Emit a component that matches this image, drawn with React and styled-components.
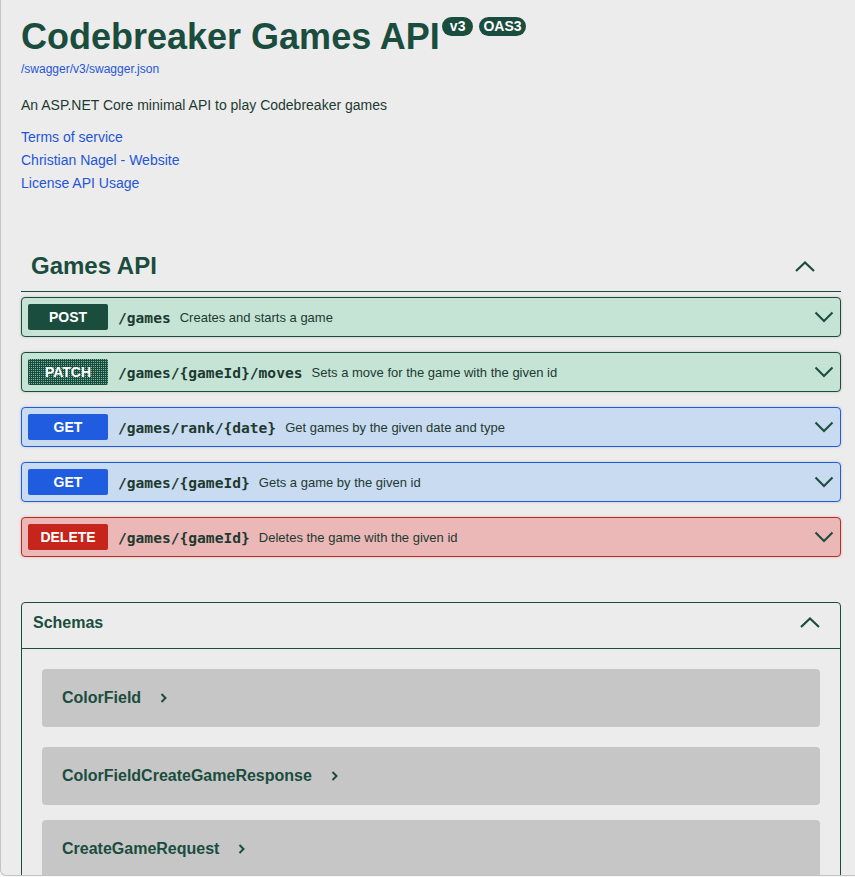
import React from "react";
import styled, { createGlobalStyle } from "styled-components";

const GREEN = "#1b4d3e";
const LINK = "#1f55d8";

const Global = createGlobalStyle`
  html, body { margin: 0; padding: 0; background: #f7f7f7; }
  body { font-family: "Liberation Sans", Arial, sans-serif; color: ${GREEN}; }
  * { box-sizing: border-box; }
`;

const Page = styled.div`
  height: 876px;
  border-left: 1px solid #c4c4c4;
  border-bottom: 1px solid #c4c4c4;
  border-bottom-left-radius: 6px;
  background: #ececec;
  overflow: hidden;
  padding: 16px 14px 0 20px;
`;

const TitleRow = styled.div`
  display: flex;
  align-items: flex-start;
`;

const Title = styled.h2`
  margin: 0;
  font-size: 36px;
  line-height: 42px;
  font-weight: 700;
  color: ${GREEN};
`;

const Badge = styled.span`
  display: inline-block;
  margin: 1px 0 0 ${(p) => p.$ml}px;
  padding: 0 ${(p) => p.$px}px;
  height: 19px;
  line-height: 19px;
  border-radius: 10px;
  background: ${GREEN};
  color: #fff;
  font-size: 14px;
  font-weight: 700;
`;

const JsonLink = styled.a`
  display: block;
  margin-top: 4px;
  font-size: 12px;
  line-height: 14px;
  color: ${LINK};
  text-decoration: none;
`;

const Description = styled.p`
  margin: 21px 0 13px;
  font-size: 14px;
  line-height: 16px;
  color: #1d3a31;
`;

const InfoLink = styled.a`
  display: block;
  font-size: 14px;
  line-height: 23px;
  color: ${LINK};
  text-decoration: none;
`;

const TagHeader = styled.div`
  margin-top: 44px;
  height: 53px;
  padding: 2px 26px 0 10px;
  border-bottom: 1px solid ${GREEN};
  display: flex;
  align-items: center;
  justify-content: space-between;
`;

const TagTitle = styled.h3`
  margin: 0;
  font-size: 24px;
  line-height: 28px;
  font-weight: 700;
  color: ${GREEN};
`;

const OpList = styled.div`
  margin-top: 5px;
  display: flex;
  flex-direction: column;
  gap: 15px;
`;

const THEMES = {
  POST: { bg: "#c5e4d6", border: GREEN, badge: GREEN },
  PATCH: { bg: "#c5e4d6", border: GREEN, badge: GREEN, dither: true },
  GET: { bg: "#c9dbf0", border: "#1f5ce0", badge: "#1f5ce0" },
  DELETE: { bg: "#ebb7b7", border: "#c9261b", badge: "#c6251b" },
};

const Op = styled.div`
  height: 40px;
  padding: 0 6px;
  display: flex;
  align-items: center;
  gap: 10px;
  border: 1px solid ${(p) => THEMES[p.$method].border};
  border-radius: 4px;
  background: ${(p) => THEMES[p.$method].bg};
  box-shadow: 0 0 3px rgba(0, 0, 0, 0.19);
`;

const Method = styled.span`
  flex: none;
  width: 80px;
  height: 26px;
  line-height: 26px;
  border-radius: 2px;
  text-align: center;
  color: #fff;
  font-size: 14px;
  font-weight: 700;
  background: ${(p) =>
    THEMES[p.$method].dither
      ? `repeating-conic-gradient(#79b3a2 0 25%, ${GREEN} 0 100%) 0 0 / 2px 2px`
      : THEMES[p.$method].badge};
`;

const Path = styled.span`
  font-family: "DejaVu Sans Mono", "Liberation Mono", monospace;
  font-size: 14.6px;
  font-weight: 700;
  color: #1d3a31;
  white-space: nowrap;
`;

const Summary = styled.span`
  flex: 1;
  margin-left: -1px;
  font-size: 13px;
  color: #1d3a31;
  white-space: nowrap;
`;

const Chevron = styled.svg`
  flex: none;
  display: block;
`;

const Schemas = styled.section`
  margin-top: 45px;
  border: 1px solid ${GREEN};
  border-radius: 4px 4px 0 0;
`;

const SchemasHeader = styled.div`
  height: 46px;
  padding: 0 20px 6px 11px;
  border-bottom: 1px solid ${GREEN};
  display: flex;
  align-items: center;
  justify-content: space-between;
`;

const SchemasTitle = styled.h4`
  margin: 0;
  font-size: 16px;
  line-height: 18px;
  font-weight: 700;
  color: ${GREEN};
`;

const SchemaList = styled.div`
  padding: 20px 20px 0;
`;

const SchemaItem = styled.div`
  height: 58px;
  margin-bottom: ${(p) => p.$mb}px;
  padding-left: 20px;
  border-radius: 4px;
  background: #c6c6c6;
  display: flex;
  align-items: center;
  gap: 19px;
  font-size: 16px;
  font-weight: 700;
  color: ${GREEN};
`;

const UpArrow = () => (
  <Chevron width="20" height="11" viewBox="0 0 20 11">
    <polyline points="1,10 10,1.5 19,10" fill="none" stroke={GREEN} strokeWidth="2.2" />
  </Chevron>
);

const DownArrow = () => (
  <Chevron width="20" height="12" viewBox="0 0 20 12">
    <polyline points="1.5,1.5 10,10 18.5,1.5" fill="none" stroke={GREEN} strokeWidth="2" />
  </Chevron>
);

const RightArrow = () => (
  <Chevron width="7" height="10" viewBox="0 0 7 10">
    <polyline points="1.5,1 5.5,5 1.5,9" fill="none" stroke={GREEN} strokeWidth="2" />
  </Chevron>
);

const ops = [
  { method: "POST", path: "/games", summary: "Creates and starts a game" },
  { method: "PATCH", path: "/games/{gameId}/moves", summary: "Sets a move for the game with the given id" },
  { method: "GET", path: "/games/rank/{date}", summary: "Get games by the given date and type" },
  { method: "GET", path: "/games/{gameId}", summary: "Gets a game by the given id" },
  { method: "DELETE", path: "/games/{gameId}", summary: "Deletes the game with the given id" },
];

const schemas = [
  { name: "ColorField", mb: 20 },
  { name: "ColorFieldCreateGameResponse", mb: 15 },
  { name: "CreateGameRequest", mb: 15 },
];

export default function App() {
  return (
    <>
      <Global />
      <Page>
        <TitleRow>
          <Title>Codebreaker Games API</Title>
          <Badge $ml={2} $px={8}>v3</Badge>
          <Badge $ml={6} $px={4}>OAS3</Badge>
        </TitleRow>
        <JsonLink href="#">/swagger/v3/swagger.json</JsonLink>
        <Description>An ASP.NET Core minimal API to play Codebreaker games</Description>
        <InfoLink href="#">Terms of service</InfoLink>
        <InfoLink href="#">Christian Nagel - Website</InfoLink>
        <InfoLink href="#">License API Usage</InfoLink>

        <TagHeader>
          <TagTitle>Games API</TagTitle>
          <UpArrow />
        </TagHeader>
        <OpList>
          {ops.map((op, i) => (
            <Op key={i} $method={op.method}>
              <Method $method={op.method}>{op.method}</Method>
              <Path>{op.path}</Path>
              <Summary>{op.summary}</Summary>
              <DownArrow />
            </Op>
          ))}
        </OpList>

        <Schemas>
          <SchemasHeader>
            <SchemasTitle>Schemas</SchemasTitle>
            <UpArrow />
          </SchemasHeader>
          <SchemaList>
            {schemas.map((s) => (
              <SchemaItem key={s.name} $mb={s.mb}>
                <span>{s.name}</span>
                <RightArrow />
              </SchemaItem>
            ))}
          </SchemaList>
        </Schemas>
      </Page>
    </>
  );
}
